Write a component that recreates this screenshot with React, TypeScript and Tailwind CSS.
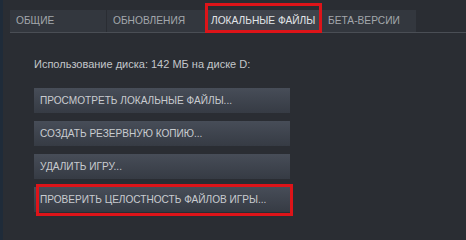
const tabs = [
  { label: 'ОБЩИЕ', w: 'w-[96px]', active: false },
  { label: 'ОБНОВЛЕНИЯ', w: 'w-[98px]', active: false },
  { label: 'ЛОКАЛЬНЫЕ ФАЙЛЫ', w: 'w-[115px]', active: true },
  { label: 'БЕТА-ВЕРСИИ', w: 'w-[94px]', active: false },
];

const actions = [
  'ПРОСМОТРЕТЬ ЛОКАЛЬНЫЕ ФАЙЛЫ...',
  'СОЗДАТЬ РЕЗЕРВНУЮ КОПИЮ...',
  'УДАЛИТЬ ИГРУ...',
  'ПРОВЕРИТЬ ЦЕЛОСТНОСТЬ ФАЙЛОВ ИГРЫ...',
];

export default function App() {
  return (
    <div className="w-[466px] h-[240px] overflow-hidden flex bg-[#2a2d33] font-['Liberation_Sans',Arial,sans-serif]">
      {/* left window edge */}
      <div className="w-[3px] bg-[#1f2b39] shrink-0" />

      <div className="flex-1 flex flex-col">
        {/* Tabs */}
        <div className="pt-[10px] pl-[7px]">
          <div className="flex gap-px h-[22px]">
            {tabs.map((t) => (
              <div
                key={t.label}
                className={`relative ${t.w} shrink-0 flex items-center px-[6px] whitespace-nowrap text-[10.2px] ${
                  t.active ? 'bg-[#3f434b] text-[#e2e5e8] pl-[5px]' : 'bg-[#33373e] text-[#a3a7ac]'
                }`}
              >
                {t.label}
                {t.active && (
                  <span className="absolute left-[-1px] right-[-1px] top-[-7px] bottom-[-1px] border-[3px] border-[#dd1419]" />
                )}
              </div>
            ))}
          </div>
          <div className="h-px bg-[#4a4e55]" />
        </div>

        {/* Local files */}
        <div className="pl-[31px] pt-[24px]">
          <div className="text-[11px] text-[#c3c6ca] leading-[14px]">
            Использование диска: 142 МБ на диске D:
          </div>
          <div className="mt-[17px] flex flex-col gap-[8px]">
            {actions.map((a, i) => (
              <div
                key={a}
                className="relative w-[256px] h-[25px] flex items-center pl-[6px] whitespace-nowrap text-[10.1px] text-[#c9ccd0] bg-gradient-to-b from-[#474d58] to-[#363b44]"
              >
                {a}
                {i === actions.length - 1 && (
                  <span className="absolute left-[2px] right-[-3px] top-[-3px] bottom-[-4px] border-[3px] border-[#dd1419]" />
                )}
              </div>
            ))}
          </div>
        </div>
      </div>
    </div>
  );
}
